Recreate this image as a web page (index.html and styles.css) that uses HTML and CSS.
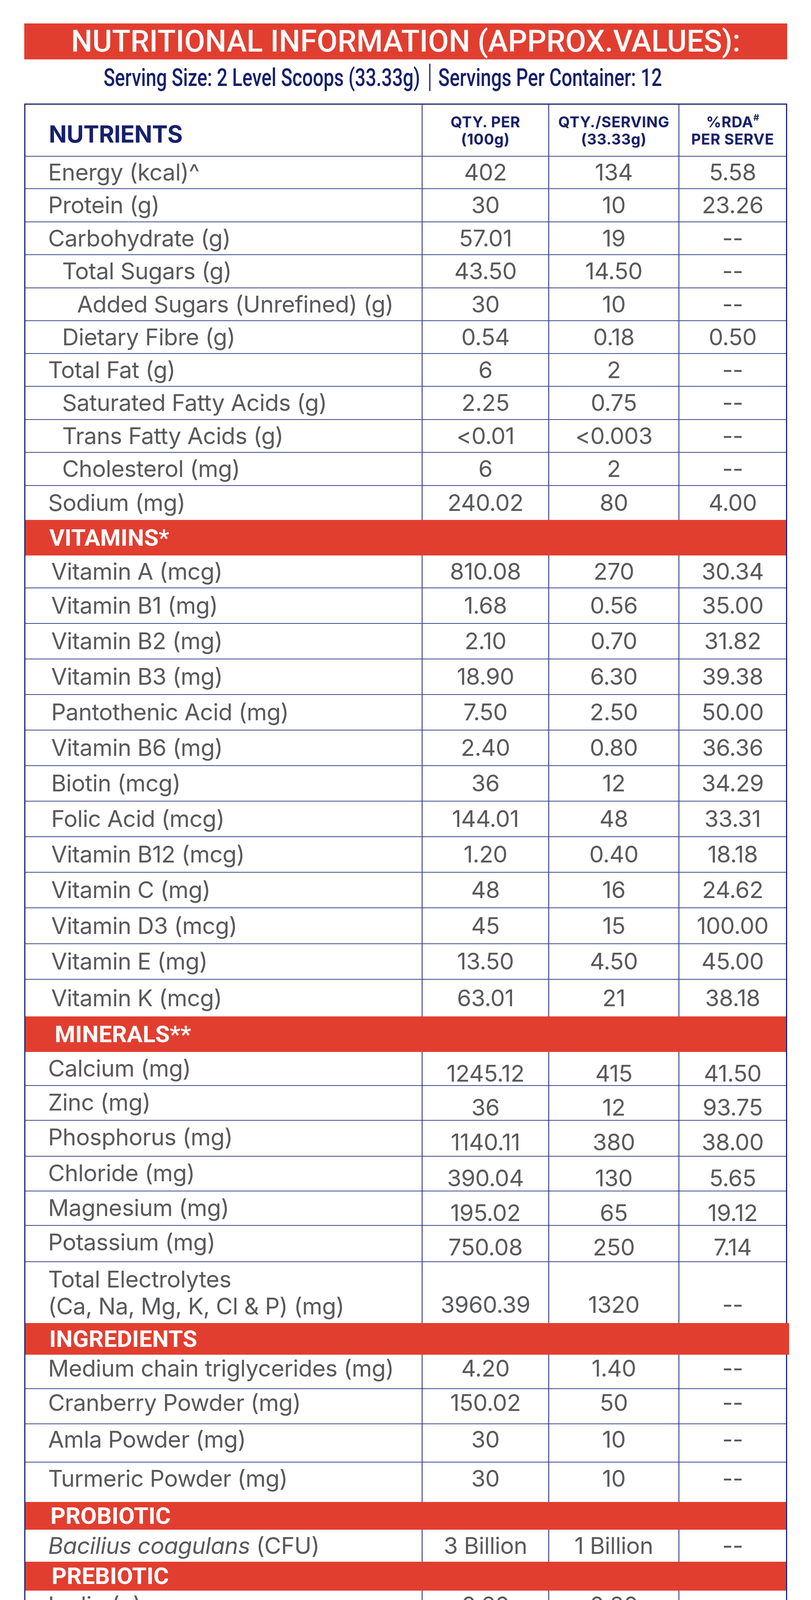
FILE: index.html
```html
<!DOCTYPE html>
<html lang="en">
<head>
<meta charset="utf-8">
<title>Nutritional Information</title>
<link rel="stylesheet" href="styles.css">
</head>
<body>
<div class="sheet">
  <div class="title-bar"><h1>NUTRITIONAL INFORMATION (APPROX.VALUES):</h1></div>
  <div class="serving">
    <div class="serving-inner">
      <span>Serving Size: 2 Level Scoops (33.33g)</span>
      <span class="divider"></span>
      <span>Servings Per Container: 12</span>
    </div>
  </div>

  <div class="nt">
    <div class="row hdr h133">
      <div class="cell name"><span>NUTRIENTS</span></div>
      <div class="cell"><span class="hd">QTY. PER<br>(100g)</span></div>
      <div class="cell"><span class="hd">QTY./SERVING<br>(33.33g)</span></div>
      <div class="cell"><span class="hd">%RDA<sup>#</sup><br>PER SERVE</span></div>
    </div>

    <div class="row h83"><div class="cell name">Energy (kcal)^</div><div class="cell val">402</div><div class="cell val">134</div><div class="cell val">5.58</div></div>
    <div class="row h85"><div class="cell name">Protein (g)</div><div class="cell val">30</div><div class="cell val">10</div><div class="cell val">23.26</div></div>
    <div class="row h84"><div class="cell name">Carbohydrate (g)</div><div class="cell val">57.01</div><div class="cell val">19</div><div class="cell val">--</div></div>
    <div class="row h85"><div class="cell name i1">Total Sugars (g)</div><div class="cell val">43.50</div><div class="cell val">14.50</div><div class="cell val">--</div></div>
    <div class="row h84"><div class="cell name i2">Added Sugars (Unrefined) (g)</div><div class="cell val">30</div><div class="cell val">10</div><div class="cell val">--</div></div>
    <div class="row h84"><div class="cell name i1">Dietary Fibre (g)</div><div class="cell val">0.54</div><div class="cell val">0.18</div><div class="cell val">0.50</div></div>
    <div class="row h84"><div class="cell name">Total Fat (g)</div><div class="cell val">6</div><div class="cell val">2</div><div class="cell val">--</div></div>
    <div class="row h85"><div class="cell name i1">Saturated Fatty Acids (g)</div><div class="cell val">2.25</div><div class="cell val">0.75</div><div class="cell val">--</div></div>
    <div class="row h84"><div class="cell name i1">Trans Fatty Acids (g)</div><div class="cell val">&lt;0.01</div><div class="cell val">&lt;0.003</div><div class="cell val">--</div></div>
    <div class="row h85"><div class="cell name i1">Cholesterol (mg)</div><div class="cell val">6</div><div class="cell val">2</div><div class="cell val">--</div></div>
    <div class="row h87 nb"><div class="cell name">Sodium (mg)</div><div class="cell val">240.02</div><div class="cell val">80</div><div class="cell val">4.00</div></div>

    <div class="band h91">VITAMINS*</div>
    <div class="row h84 vit"><div class="cell name">Vitamin A (mcg)</div><div class="cell val">810.08</div><div class="cell val">270</div><div class="cell val">30.34</div></div>
    <div class="row h91 vit"><div class="cell name">Vitamin B1 (mg)</div><div class="cell val">1.68</div><div class="cell val">0.56</div><div class="cell val">35.00</div></div>
    <div class="row h91 vit"><div class="cell name">Vitamin B2 (mg)</div><div class="cell val">2.10</div><div class="cell val">0.70</div><div class="cell val">31.82</div></div>
    <div class="row h91 vit"><div class="cell name">Vitamin B3 (mg)</div><div class="cell val">18.90</div><div class="cell val">6.30</div><div class="cell val">39.38</div></div>
    <div class="row h91 vit"><div class="cell name">Pantothenic Acid (mg)</div><div class="cell val">7.50</div><div class="cell val">2.50</div><div class="cell val">50.00</div></div>
    <div class="row h91 vit"><div class="cell name">Vitamin B6 (mg)</div><div class="cell val">2.40</div><div class="cell val">0.80</div><div class="cell val">36.36</div></div>
    <div class="row h91 vit"><div class="cell name">Biotin (mcg)</div><div class="cell val">36</div><div class="cell val">12</div><div class="cell val">34.29</div></div>
    <div class="row h91 vit"><div class="cell name">Folic Acid (mcg)</div><div class="cell val">144.01</div><div class="cell val">48</div><div class="cell val">33.31</div></div>
    <div class="row h91 vit"><div class="cell name">Vitamin B12 (mcg)</div><div class="cell val">1.20</div><div class="cell val">0.40</div><div class="cell val">18.18</div></div>
    <div class="row h91 vit"><div class="cell name">Vitamin C (mg)</div><div class="cell val">48</div><div class="cell val">16</div><div class="cell val">24.62</div></div>
    <div class="row h92 vit"><div class="cell name">Vitamin D3 (mcg)</div><div class="cell val">45</div><div class="cell val">15</div><div class="cell val">100.00</div></div>
    <div class="row h91 vit"><div class="cell name">Vitamin E (mg)</div><div class="cell val">13.50</div><div class="cell val">4.50</div><div class="cell val">45.00</div></div>
    <div class="row h94 vit nb"><div class="cell name">Vitamin K (mcg)</div><div class="cell val">63.01</div><div class="cell val">21</div><div class="cell val">38.18</div></div>

    <div class="band h91 band-min">MINERALS**</div>
    <div class="row h87 mn"><div class="cell name">Calcium (mg)</div><div class="cell val">1245.12</div><div class="cell val">415</div><div class="cell val">41.50</div></div>
    <div class="row h89 mn"><div class="cell name">Zinc (mg)</div><div class="cell val">36</div><div class="cell val">12</div><div class="cell val">93.75</div></div>
    <div class="row h92 mn"><div class="cell name">Phosphorus (mg)</div><div class="cell val">1140.11</div><div class="cell val">380</div><div class="cell val">38.00</div></div>
    <div class="row h89 mn"><div class="cell name">Chloride (mg)</div><div class="cell val">390.04</div><div class="cell val">130</div><div class="cell val">5.65</div></div>
    <div class="row h88 mn"><div class="cell name">Magnesium (mg)</div><div class="cell val">195.02</div><div class="cell val">65</div><div class="cell val">19.12</div></div>
    <div class="row h93 mn"><div class="cell name">Potassium (mg)</div><div class="cell val">750.08</div><div class="cell val">250</div><div class="cell val">7.14</div></div>
    <div class="row h156 te nb"><div class="cell name"><span>Total Electrolytes<br>(Ca, Na, Mg, K, Cl &amp; P) (mg)</span></div><div class="cell val">3960.39</div><div class="cell val">1320</div><div class="cell val">--</div></div>

    <div class="band h81 band-ing">INGREDIENTS</div>
    <div class="row h88 ing"><div class="cell name">Medium chain triglycerides (mg)</div><div class="cell val">4.20</div><div class="cell val">1.40</div><div class="cell val">--</div></div>
    <div class="row h90 ing"><div class="cell name">Cranberry Powder (mg)</div><div class="cell val">150.02</div><div class="cell val">50</div><div class="cell val">--</div></div>
    <div class="row h98 ing"><div class="cell name">Amla Powder (mg)</div><div class="cell val">30</div><div class="cell val">10</div><div class="cell val">--</div></div>
    <div class="row h101 ing nb"><div class="cell name">Turmeric Powder (mg)</div><div class="cell val">30</div><div class="cell val">10</div><div class="cell val">--</div></div>

    <div class="band h71 band-pro">PROBIOTIC</div>
    <div class="row h82 nb"><div class="cell name"><span><em>Bacilius coagulans</em> (CFU)</span></div><div class="cell val">3 Billion</div><div class="cell val">1 Billion</div><div class="cell val">--</div></div>

    <div class="band h74 band-pre">PREBIOTIC</div>
    <div class="row h87 last"><div class="cell name up">Inulin (g)</div><div class="cell val up">0.60</div><div class="cell val up">0.20</div><div class="cell val up">--</div></div>
  </div>
</div>
</body>
</html>
```

FILE: styles.css
```css
* {
  box-sizing: border-box;
  margin: 0;
  padding: 0;
}

html,
body {
  background: #ffffff;
}

body {
  font-family: Inter, "Noto Sans", "Liberation Sans", sans-serif;
  color: #58595b;
}

.sheet {
  width: 1952px;
  margin-left: 62px;
  padding-top: 60px;
}

/* ---------- title ---------- */
.title-bar {
  height: 92px;
  background: #e23e30;
  display: flex;
  align-items: center;
  justify-content: center;
}

.title-bar h1 {
  font-family: Roboto, "Liberation Sans", sans-serif;
  font-weight: 500;
  font-size: 77px;
  line-height: 1;
  color: #ffffff;
  white-space: nowrap;
}

/* ---------- serving line ---------- */
.serving {
  height: 70px;
  margin: 11px 0 32px;
  padding-left: 203px;
  display: flex;
  align-items: center;
}

.serving-inner {
  display: flex;
  align-items: center;
  white-space: nowrap;
  font-family: Roboto, "Liberation Sans", sans-serif;
  font-weight: 500;
  font-size: 63px;
  line-height: 1;
  color: #16206b;
  transform: scaleX(0.763);
  transform-origin: 0 50%;
}

.divider {
  display: block;
  width: 4px;
  height: 70px;
  background: #16206b;
  margin: 0 26px 0 31px;
}

/* ---------- table ---------- */
.nt {
  border: 3px solid #1c2670;
  border-bottom-width: 2px;
}

.row {
  display: grid;
  grid-template-columns: 1014px 324px 333px 1fr;
  border-bottom: 2px solid #3d4a8d;
}

.row.nb,
.row.last {
  border-bottom: 0;
}

.cell {
  display: flex;
  align-items: center;
  justify-content: center;
  font-size: 59px;
  line-height: 1.2;
  letter-spacing: -0.01em;
  white-space: nowrap;
  min-width: 0;
}

.cell + .cell {
  border-left: 2px solid #1c2670;
}

.name {
  justify-content: flex-start;
  padding-left: 58px;
}

.name.i1 {
  padding-left: 94px;
}

.name.i2 {
  padding-left: 132px;
}

.vit .name {
  padding-left: 66px;
}

.mn .val {
  padding-top: 20px;
}

.mn .name {
  padding-bottom: 6px;
}

.ing .cell {
  padding-bottom: 18px;
}

.up {
  padding-bottom: 12px;
}

.te .name {
  line-height: 69px;
}

.te .val {
  align-items: flex-end;
  line-height: 69px;
  padding-bottom: 13px;
}

.cell em {
  font-style: italic;
}

/* header row */
.hdr .cell {
  font-weight: 700;
  color: #16206b;
  font-size: 38px;
  line-height: 44px;
  letter-spacing: 0.02em;
}

.hd {
  display: block;
  text-align: center;
}

.hdr .name {
  font-size: 60px;
  letter-spacing: -0.01em;
  padding-left: 60px;
  padding-top: 18px;
}

.hdr sup {
  font-size: 0.6em;
  line-height: 0;
  vertical-align: 0.75em;
  letter-spacing: 0;
}

/* section bands */
.band {
  background: #e23e30;
  color: #ffffff;
  font-family: Roboto, "Liberation Sans", sans-serif;
  font-weight: 700;
  font-size: 60px;
  line-height: 1;
  display: flex;
  align-items: center;
  padding-left: 61px;
}

.band-min {
  padding-left: 75px;
}

.band-ing {
  margin-right: -8px;
}

.band-pro {
  padding-left: 64px;
}

.band-pre {
  padding-left: 67px;
}

/* row heights */
.h71 { height: 71px; }
.h74 { height: 74px; }
.h81 { height: 81px; }
.h82 { height: 82px; }
.h83 { height: 83px; }
.h84 { height: 84px; }
.h85 { height: 85px; }
.h87 { height: 87px; }
.h88 { height: 88px; }
.h89 { height: 89px; }
.h90 { height: 90px; }
.h91 { height: 91px; }
.h92 { height: 92px; }
.h93 { height: 93px; }
.h94 { height: 94px; }
.h98 { height: 98px; }
.h101 { height: 101px; }
.h133 { height: 133px; }
.h156 { height: 156px; }
```
